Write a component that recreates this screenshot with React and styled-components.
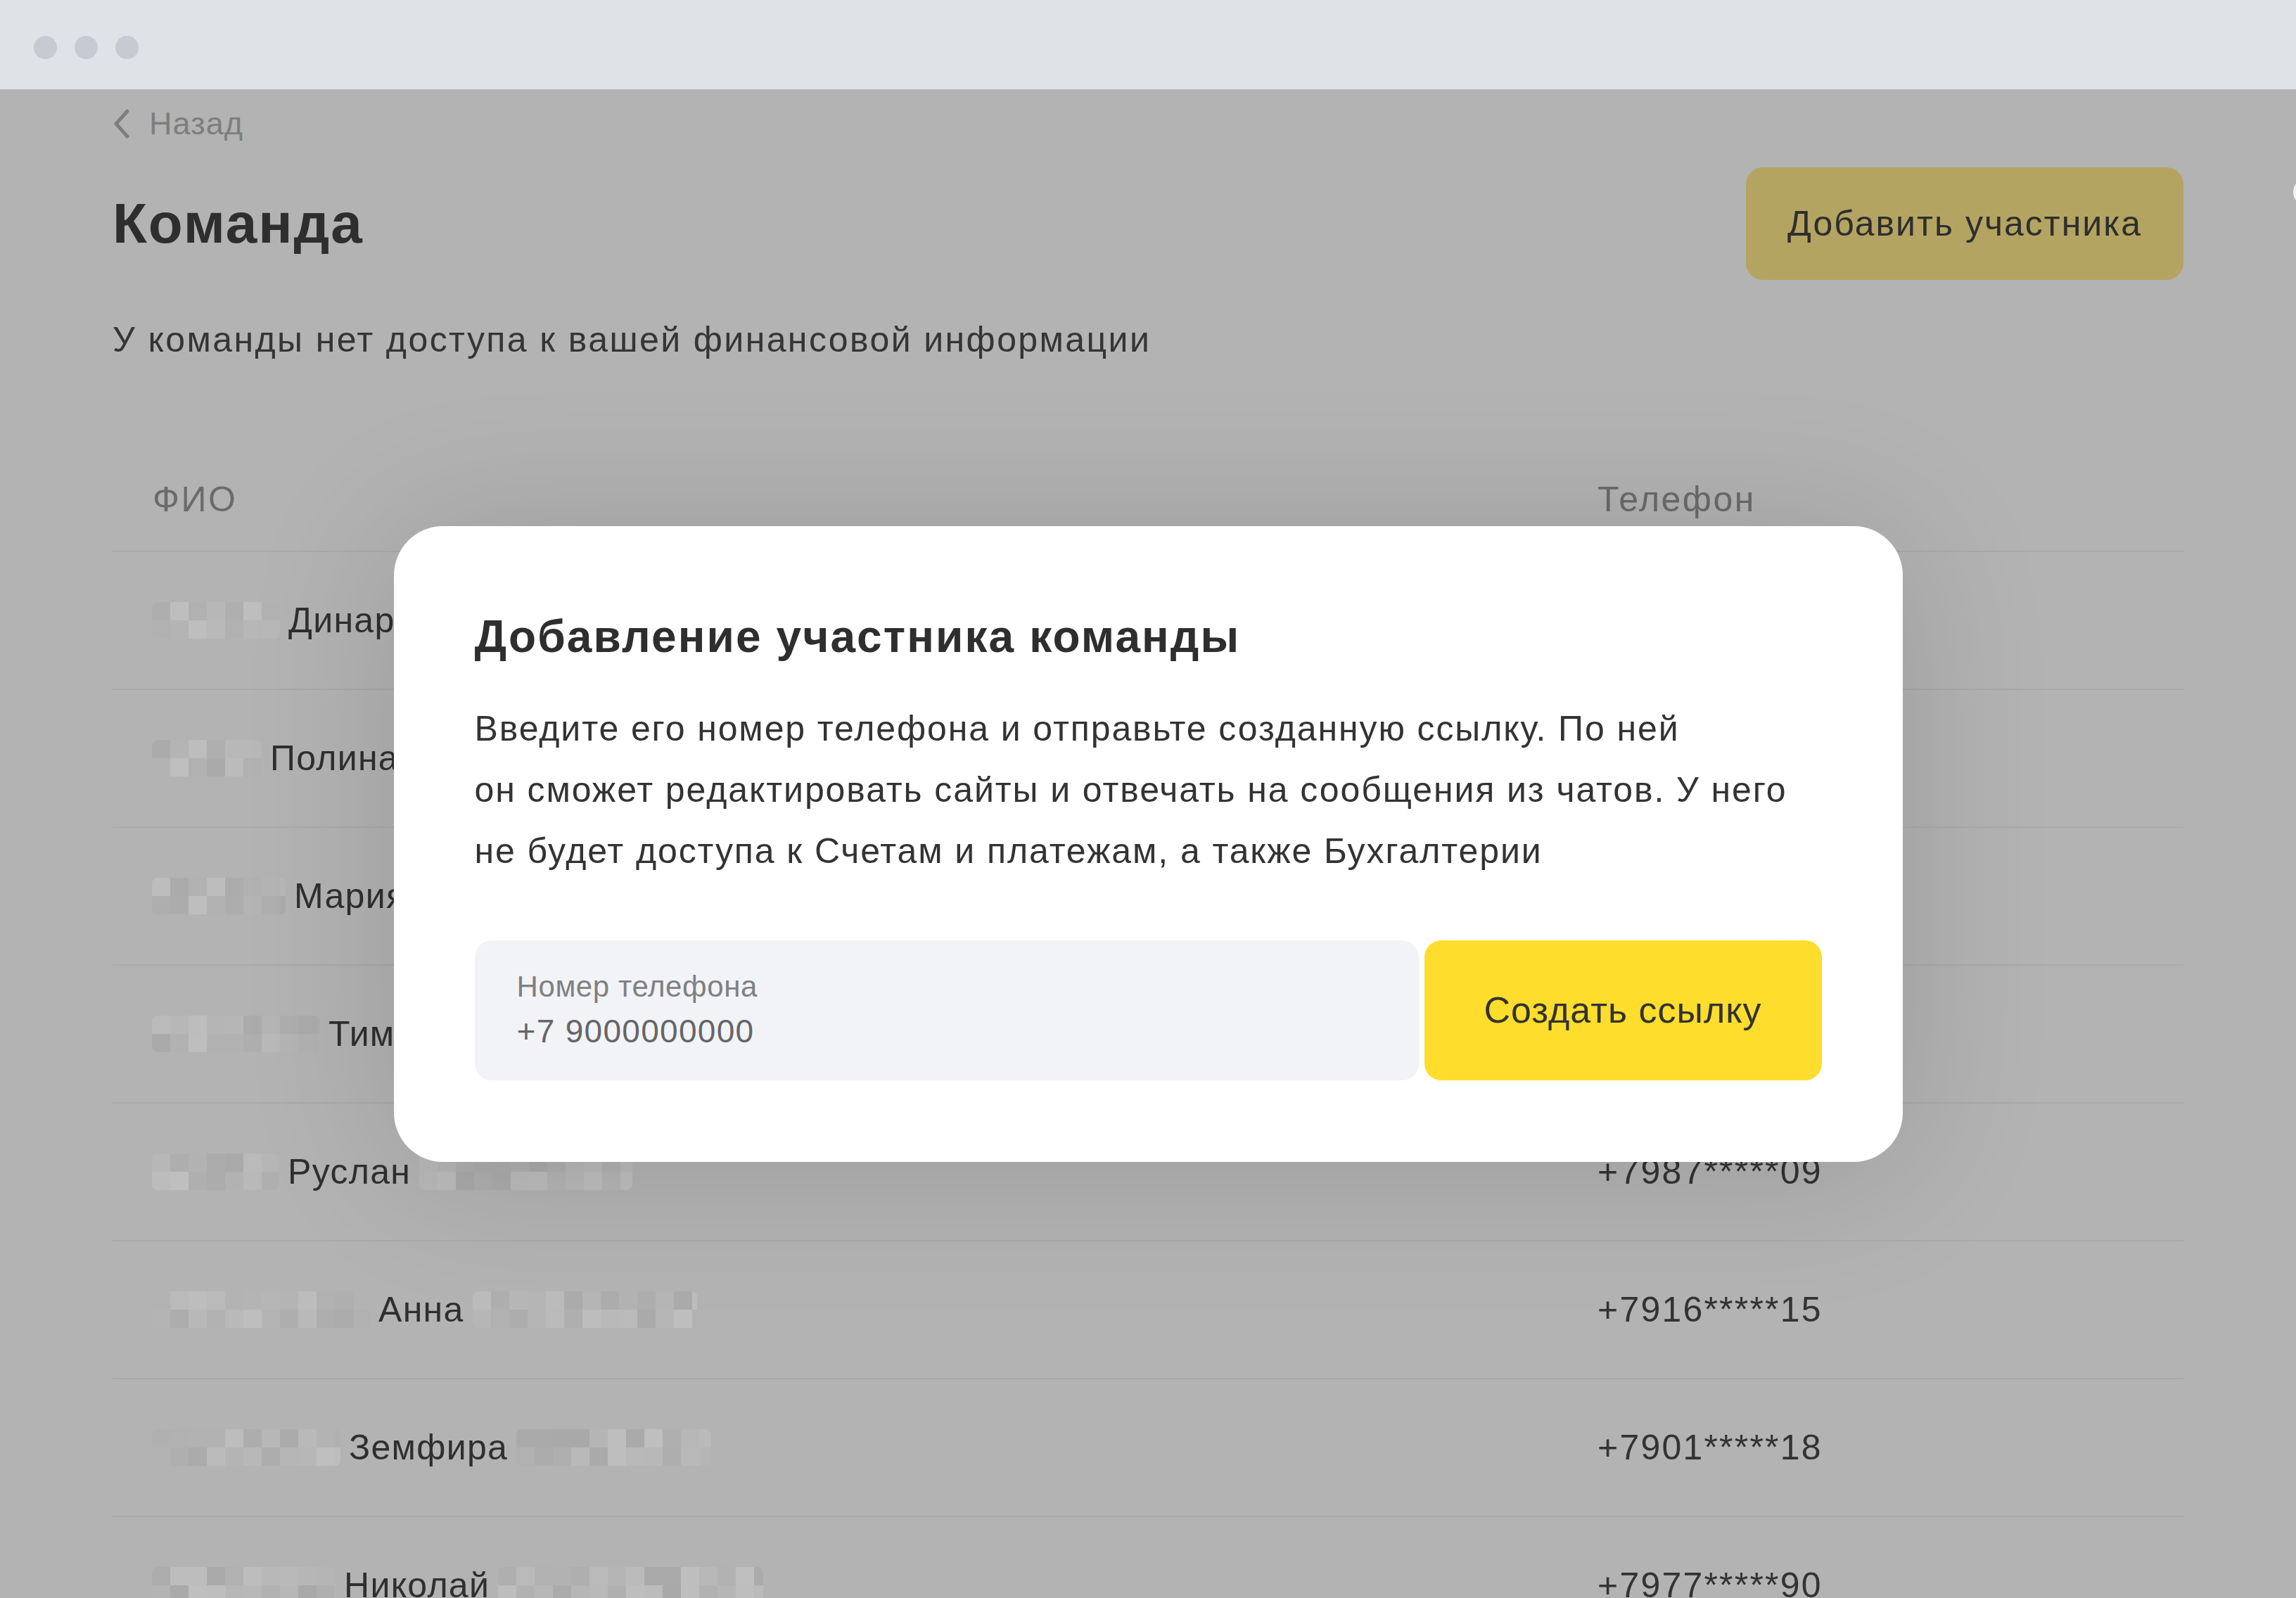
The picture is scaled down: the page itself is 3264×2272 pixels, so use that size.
import React from 'react';
import styled, { createGlobalStyle } from 'styled-components';

const CELL = 26;

const MEMBERS = [
  { name: 'Динара', pre: 182, post: 290, phone: '+7917*****42' },
  { name: 'Полина', pre: 156, post: 260, phone: '+7926*****07' },
  { name: 'Мария', pre: 190, post: 300, phone: '+7903*****61' },
  { name: 'Тимур', pre: 239, post: 280, phone: '+7999*****23' },
  { name: 'Руслан', pre: 181, post: 303, phone: '+7987*****09' },
  { name: 'Анна', pre: 310, post: 319, phone: '+7916*****15' },
  { name: 'Земфира', pre: 268, post: 277, phone: '+7901*****18' },
  { name: 'Николай', pre: 261, post: 377, phone: '+7977*****90' },
];

// simple seeded shades so the mosaic looks the same on every render
const shadesFor = (seed, count) => {
  let s = seed * 9301 + 49297;
  const out = [];
  for (let i = 0; i < count; i++) {
    s = (s * 9301 + 49297) % 233280;
    const v = 169 + Math.round((s / 233280) * 22);
    out.push(`rgb(${v},${v},${v})`);
  }
  return out;
};

const Mosaic = ({ width, seed }) => {
  const cols = Math.ceil(width / CELL);
  const shades = shadesFor(seed, cols * 2);
  return (
    <MosaicBox $w={width} $cols={cols}>
      {shades.map((c, i) => (
        <span key={i} style={{ background: c }} />
      ))}
    </MosaicBox>
  );
};

const ChevronLeft = () => (
  <svg width="26" height="42" viewBox="0 0 26 42" fill="none">
    <path
      d="M21 3 L5 21 L21 39"
      stroke="#7E7E7E"
      strokeWidth="5"
      strokeLinecap="round"
      strokeLinejoin="round"
    />
  </svg>
);

const App = () => {
  return (
    <>
      <GlobalStyle />
      <Window>
        <TitleBar>
          <Dot />
          <Dot />
          <Dot />
        </TitleBar>
        <Viewport>
          <Page>
            <BackLink>
              <ChevronLeft />
              Назад
            </BackLink>
            <Header>
              <Heading>Команда</Heading>
              <AddButton>Добавить участника</AddButton>
            </Header>
            <Subtitle>У команды нет доступа к вашей финансовой информации</Subtitle>
            <Table>
              <HeadRow>
                <HeadCell>ФИО</HeadCell>
                <HeadCell>Телефон</HeadCell>
              </HeadRow>
              {MEMBERS.map((m, i) => (
                <Row key={m.name}>
                  <NameCell>
                    <Mosaic width={m.pre} seed={i * 7 + 3} />
                    <span>{m.name}</span>
                    <Mosaic width={m.post} seed={i * 11 + 5} />
                  </NameCell>
                  <PhoneCell>{m.phone}</PhoneCell>
                </Row>
              ))}
            </Table>
          </Page>
          <EdgeBubble />
          <Backdrop>
            <Modal>
              <ModalTitle>Добавление участника команды</ModalTitle>
              <ModalText>
                Введите его номер телефона и отправьте созданную ссылку. По ней
                <br />
                он сможет редактировать сайты и отвечать на сообщения из чатов. У него
                <br />
                не будет доступа к Счетам и платежам, а также Бухгалтерии
              </ModalText>
              <FormRow>
                <PhoneField>
                  <FieldLabel>Номер телефона</FieldLabel>
                  <FieldValue>+7 9000000000</FieldValue>
                </PhoneField>
                <CreateButton>Создать ссылку</CreateButton>
              </FormRow>
            </Modal>
          </Backdrop>
        </Viewport>
      </Window>
    </>
  );
};

const GlobalStyle = createGlobalStyle`
  html, body {
    margin: 0;
    padding: 0;
  }
  body {
    font-family: 'Liberation Sans', Arial, sans-serif;
    background: #b3b3b3;
    color: #333;
  }
`;

const Window = styled.div`
  display: flex;
  flex-direction: column;
  height: 100vh;
  overflow: hidden;
`;

const TitleBar = styled.div`
  flex: 0 0 127px;
  display: flex;
  align-items: center;
  gap: 25px;
  padding: 8px 0 0 48px;
  box-sizing: border-box;
  background: #dfe2e7;
`;

const Dot = styled.div`
  width: 33px;
  height: 33px;
  border-radius: 50%;
  background: #c5cad3;
`;

const Viewport = styled.div`
  position: relative;
  flex: 1;
  overflow: hidden;
  background: #b3b3b3;
`;

const Page = styled.div`
  max-width: 2944px;
  margin: 0 auto;
  padding-top: 24px;
`;

const BackLink = styled.div`
  display: flex;
  align-items: center;
  gap: 26px;
  height: 50px;
  font-size: 45px;
  letter-spacing: 1px;
  color: #7e7e7e;
`;

const Header = styled.div`
  display: flex;
  align-items: center;
  justify-content: space-between;
  margin-top: 37px;
`;

const Heading = styled.h1`
  margin: 0;
  font-size: 80px;
  font-weight: 700;
  line-height: 1;
  letter-spacing: 2px;
  color: #2e2e2e;
`;

const AddButton = styled.div`
  display: flex;
  align-items: center;
  justify-content: center;
  width: 622px;
  height: 160px;
  border-radius: 24px;
  background: #b4a462;
  font-size: 50px;
  letter-spacing: 2px;
  color: #2e2e2e;
`;

const Subtitle = styled.p`
  margin: 55px 0 0;
  font-size: 50px;
  line-height: 60px;
  letter-spacing: 2.4px;
  color: #353535;
`;

const Table = styled.div`
  margin-top: 124px;
`;

const HeadRow = styled.div`
  display: grid;
  grid-template-columns: 2111px 1fr;
  align-items: center;
  height: 146px;
  border-bottom: 2px solid #a9a9a9;
`;

const HeadCell = styled.div`
  font-size: 50px;
  letter-spacing: 2.5px;
  color: #6b6b6b;

  &:first-child {
    padding-left: 57px;
  }
`;

const Row = styled.div`
  display: grid;
  grid-template-columns: 2111px 1fr;
  align-items: center;
  height: 196px;
  box-sizing: border-box;
  border-bottom: 2px solid #a9a9a9;
`;

const NameCell = styled.div`
  display: flex;
  align-items: center;
  gap: 12px;
  padding-left: 56px;
  font-size: 50px;
  letter-spacing: 1.3px;
  color: #2f2f2f;
`;

const PhoneCell = styled.div`
  font-size: 50px;
  letter-spacing: 2.2px;
  color: #333;
`;

const MosaicBox = styled.div`
  display: grid;
  grid-template-columns: repeat(${(p) => p.$cols}, ${CELL}px);
  grid-template-rows: repeat(2, ${CELL}px);
  width: ${(p) => p.$w}px;
  height: ${CELL * 2}px;
  border-radius: 8px;
  overflow: hidden;
  flex-shrink: 0;
`;

const EdgeBubble = styled.div`
  position: absolute;
  top: 126px;
  left: 3260px;
  width: 40px;
  height: 40px;
  border-radius: 50%;
  background: #f2f2f2;
`;

const Backdrop = styled.div`
  position: absolute;
  inset: 0;
  display: flex;
  align-items: center;
  justify-content: center;
`;

const Modal = styled.div`
  width: 2145px;
  box-sizing: border-box;
  padding: 119px 115px 116px;
  border-radius: 70px;
  background: #fff;
  box-shadow: 0 10px 220px rgba(0, 0, 0, 0.14);
`;

const ModalTitle = styled.h2`
  margin: 0;
  font-size: 64px;
  line-height: 76px;
  font-weight: 700;
  letter-spacing: 2.1px;
  color: #2e2e2e;
`;

const ModalText = styled.p`
  margin: 50px 0 0;
  font-size: 50px;
  line-height: 87px;
  letter-spacing: 1.9px;
  color: #333;
`;

const FormRow = styled.div`
  display: flex;
  gap: 8px;
  margin-top: 83px;
`;

const PhoneField = styled.div`
  flex: 1;
  display: flex;
  flex-direction: column;
  justify-content: center;
  gap: 10px;
  height: 199px;
  box-sizing: border-box;
  padding-left: 60px;
  border-radius: 24px;
  background: #f2f3f7;
`;

const FieldLabel = styled.div`
  font-size: 42px;
  line-height: 50px;
  letter-spacing: 0.6px;
  color: #808080;
`;

const FieldValue = styled.div`
  font-size: 46px;
  line-height: 56px;
  letter-spacing: 1.3px;
  color: #666;
`;

const CreateButton = styled.div`
  display: flex;
  align-items: center;
  justify-content: center;
  width: 565px;
  height: 199px;
  border-radius: 24px;
  background: #ffdd2d;
  font-size: 52px;
  letter-spacing: 1px;
  color: #333;
`;

export default App;
